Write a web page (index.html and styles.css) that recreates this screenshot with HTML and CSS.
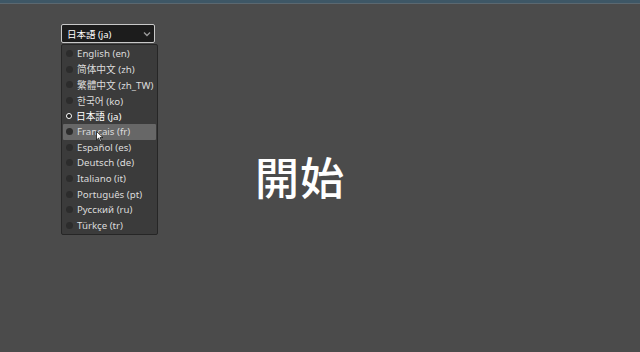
FILE: index.html
```html
<!DOCTYPE html>
<html lang="ja">
<head>
    <meta charset="UTF-8">
    <meta name="viewport" content="width=device-width, initial-scale=1.0">
    <title>開始</title>
    <link rel="stylesheet" href="styles.css">
</head>
<body>

    <div class="topbar"></div>

    <div class="screen">
        <!-- Language picker -->
        <div class="lang">
            <div class="lang-select">
                <span>日本語 (ja)</span>
                <svg class="chev" width="8" height="6" viewBox="0 0 8 6"><path d="M1 1.5 L4 4.5 L7 1.5" fill="none" stroke="#9a9a9a" stroke-width="1.4"/></svg>
            </div>
            <ul class="lang-list">
                <li><i></i>English (en)</li>
                <li><i></i>简体中文 (zh)</li>
                <li><i></i>繁體中文 (zh_TW)</li>
                <li lang="ko"><i></i>한국어 (ko)</li>
                <li class="on"><i></i>日本語 (ja)</li>
                <li class="hover"><i></i>Français (fr)</li>
                <li><i></i>Español (es)</li>
                <li><i></i>Deutsch (de)</li>
                <li><i></i>Italiano (it)</li>
                <li><i></i>Português (pt)</li>
                <li><i></i>Русский (ru)</li>
                <li><i></i>Türkçe (tr)</li>
            </ul>
            <svg class="cursor" width="8" height="12" viewBox="0 0 8 12"><path d="M0.5 0.5 L0.5 9 L2.6 7.1 L4 10.5 L5.4 9.9 L4 6.6 L7 6.6 Z" fill="#fff" stroke="#111" stroke-width="0.8"/></svg>
        </div>

        <h1 class="title">開始</h1>
    </div>

</body>
</html>
```

FILE: styles.css
```css
body {
    margin: 0;
    background: #4b4b4b;
    font-family: "Noto Sans", "Noto Sans CJK JP", sans-serif;
    color: #e6e6e6;
    height: 352px;
    overflow: hidden;
}

.topbar {
    height: 3px;
    background: #3e5766;
    border-bottom: 1px solid #5b6870;
}

.screen {
    position: relative;
    height: 348px;
    display: flex;
    align-items: center;
    justify-content: center;
}

.lang {
    position: absolute;
    left: 61px;
    top: 20px;
}

.lang-select {
    width: 87px;
    height: 17px;
    background: #1c1c1c;
    border: 1px solid #c8c8c8;
    border-radius: 2px;
    display: flex;
    align-items: center;
    padding-left: 5px;
    box-sizing: content-box;
    font-size: 9.5px;
    color: #fff;
}

.lang-select span {
    flex: 1;
}

.chev {
    margin-right: 3px;
}

.lang-list {
    list-style: none;
    margin: 1px 0 0 0;
    padding: 1px 1px 1px;
    width: 93px;
    background: #3b3b3b;
    border: 1px solid #262626;
    border-radius: 2px;
    font-size: 9.7px;
}

.lang-list li {
    height: 15.6px;
    display: flex;
    align-items: center;
    padding-left: 3px;
    color: #dcdcdc;
    border-radius: 1px;
}

.lang-list li i {
    width: 7px;
    height: 7px;
    border-radius: 50%;
    background: #2c2c2c;
    margin-right: 4px;
    flex: none;
}

.lang-list li.on i {
    width: 4px;
    height: 4px;
    background: #1c1c1c;
    border: 1.5px solid #fff;
}

.lang-list li.on {
    color: #fff;
}

.lang-list li.hover {
    background: #676767;
}

.lang-list li[lang="ko"] {
    font-family: "Noto Sans", "Noto Sans CJK KR", sans-serif;
}

.cursor {
    position: absolute;
    left: 35px;
    top: 107px;
}

.title {
    margin: 0 40px 4px 0;
    font-size: 44px;
    font-weight: 500;
    color: #fff;
    letter-spacing: 1px;
}
```
